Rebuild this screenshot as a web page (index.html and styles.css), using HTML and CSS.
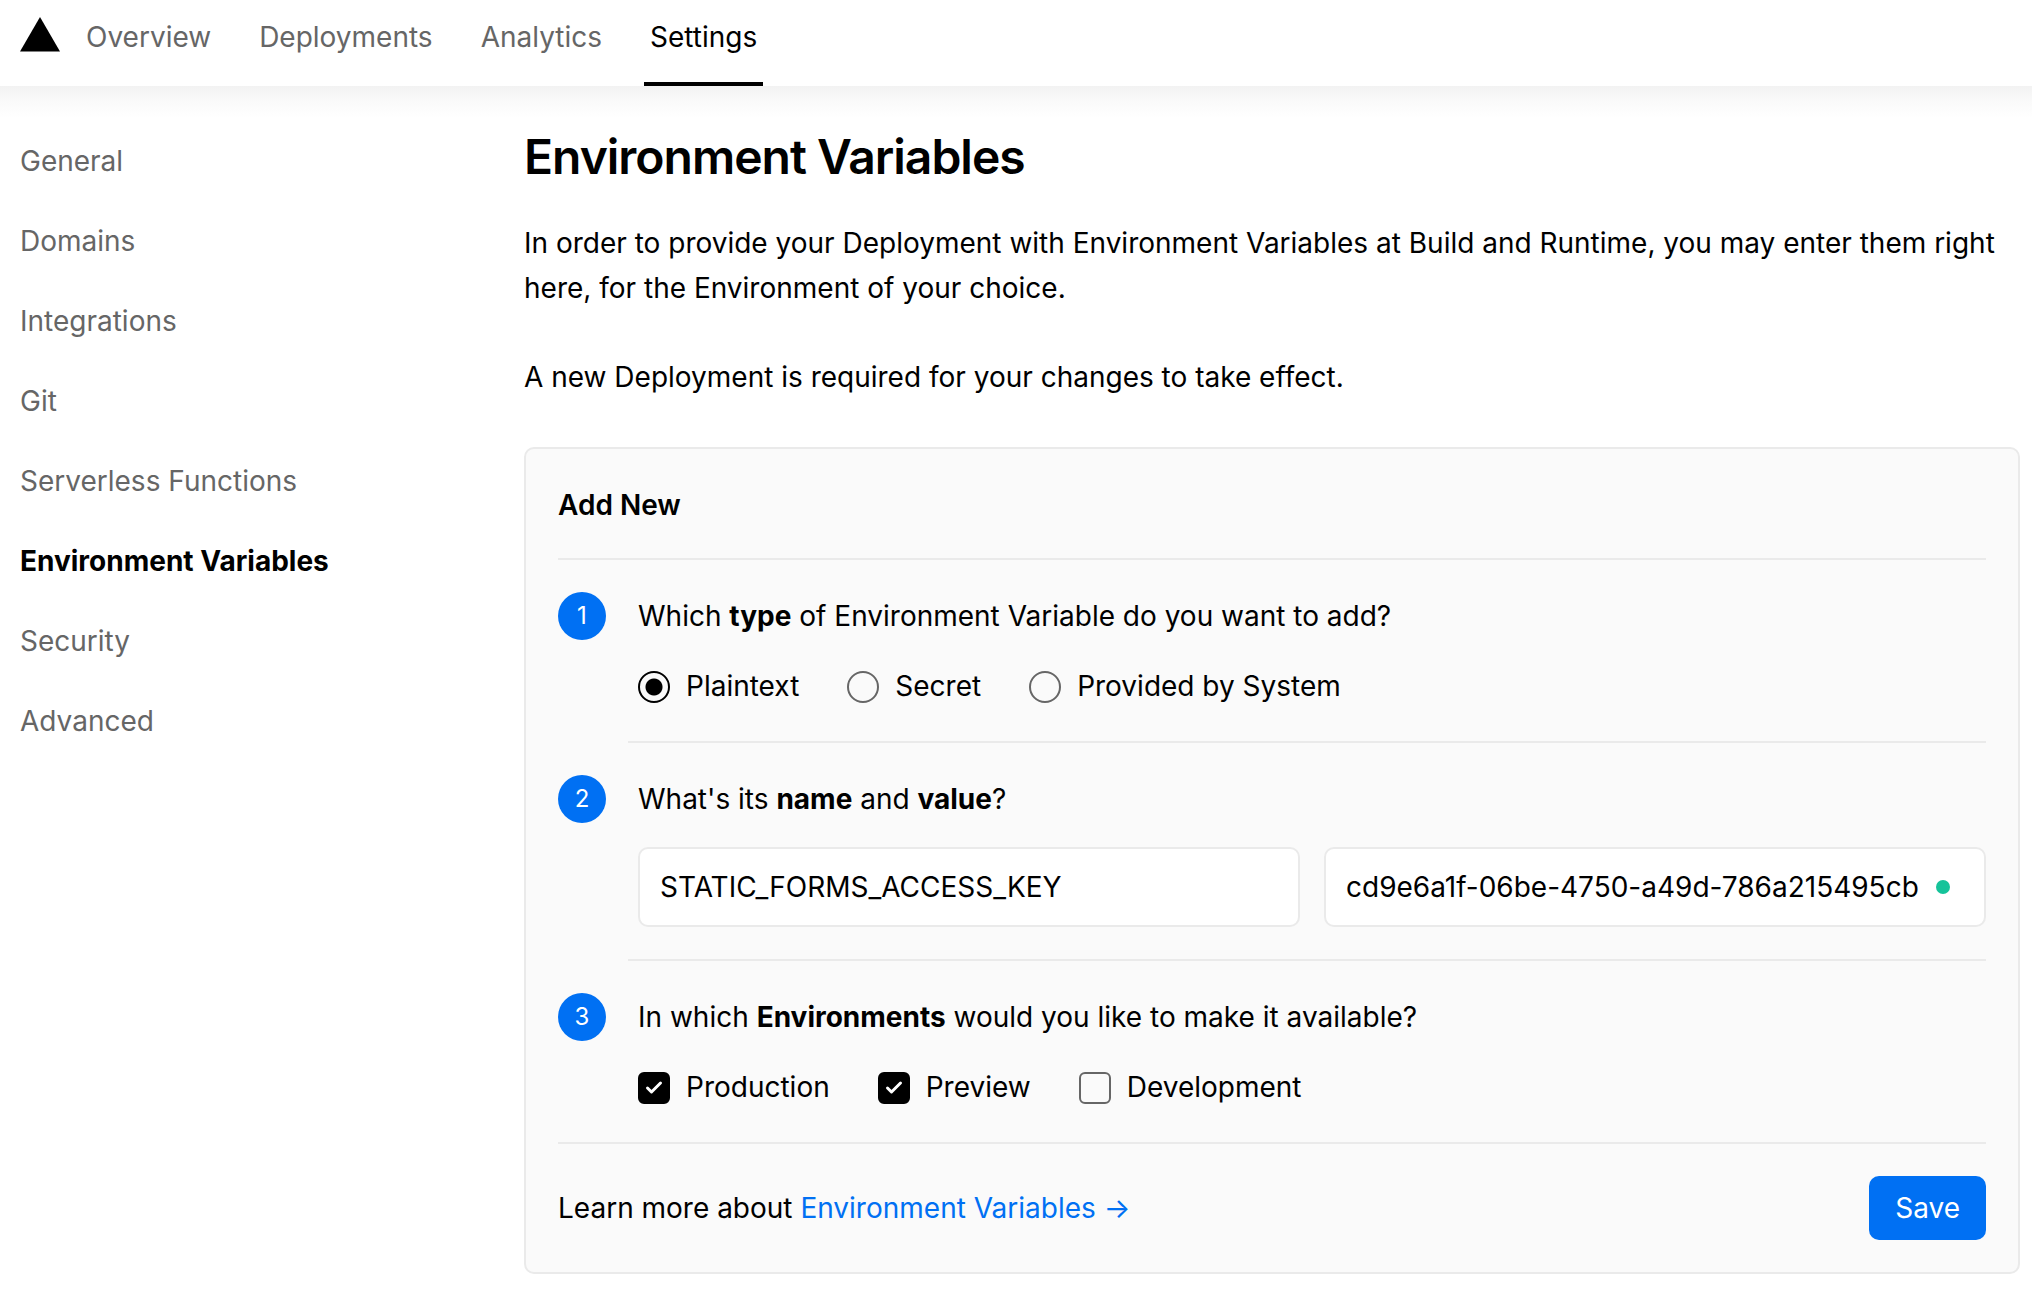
FILE: index.html
```html
<!DOCTYPE html>
<html lang="en">
<head>
<meta charset="utf-8">
<meta name="viewport" content="width=device-width, initial-scale=1">
<title>Environment Variables</title>
<link rel="stylesheet" href="styles.css">
</head>
<body>
<header class="topbar">
  <a class="logo" href="#" aria-label="Home"><svg width="40" height="35" viewBox="0 0 40 35" aria-hidden="true"><path d="M20 0L40 34.500H0z"/></svg></a>
  <nav class="tabs" aria-label="Project">
    <a class="tab" href="#">Overview</a>
    <a class="tab" href="#">Deployments</a>
    <a class="tab" href="#">Analytics</a>
    <a class="tab tab-active" href="#" aria-current="page">Settings</a>
  </nav>
</header>
<div class="page">
  <nav class="sidebar" aria-label="Settings">
    <a class="side-link" href="#">General</a>
    <a class="side-link" href="#">Domains</a>
    <a class="side-link" href="#">Integrations</a>
    <a class="side-link" href="#">Git</a>
    <a class="side-link" href="#">Serverless Functions</a>
    <a class="side-link side-active" href="#" aria-current="page">Environment Variables</a>
    <a class="side-link" href="#">Security</a>
    <a class="side-link" href="#">Advanced</a>
  </nav>
  <main class="content">
    <h1 class="title">Environment Variables</h1>
    <div class="intro">
      <p>In order to provide your Deployment with Environment Variables at Build and Runtime, you may enter them right here, for the Environment of your choice.</p>
      <p>A new Deployment is required for your changes to take effect.</p>
    </div>
    <form class="card">
      <h2 class="card-title">Add New</h2>
      <section class="step">
        <span class="badge">1</span>
        <div class="step-body">
          <p class="question" id="q-type">Which <strong>type</strong> of Environment Variable do you want to add?</p>
          <div class="options" role="radiogroup" aria-labelledby="q-type">
            <label class="option"><input class="radio" type="radio" name="type" checked>Plaintext</label>
            <label class="option"><input class="radio" type="radio" name="type">Secret</label>
            <label class="option"><input class="radio" type="radio" name="type">Provided by System</label>
          </div>
        </div>
      </section>
      <section class="step">
        <span class="badge">2</span>
        <div class="step-body">
          <p class="question">What's its <strong>name</strong> and <strong>value</strong>?</p>
          <div class="fields">
            <div class="field"><input class="field-input" type="text" aria-label="Name" value="STATIC_FORMS_ACCESS_KEY"></div>
            <div class="field"><input class="field-input" type="text" aria-label="Value" value="cd9e6a1f-06be-4750-a49d-786a215495cb"><span class="status-dot"></span></div>
          </div>
        </div>
      </section>
      <section class="step">
        <span class="badge">3</span>
        <div class="step-body">
          <p class="question" id="q-env">In which <strong>Environments</strong> would you like to make it available?</p>
          <div class="options" role="group" aria-labelledby="q-env">
            <label class="option"><span class="check"><input class="checkbox" type="checkbox" checked><svg class="tick" viewBox="0 0 32 32" aria-hidden="true"><path d="M9.500 16l4 4 9-9"/></svg></span>Production</label>
            <label class="option"><span class="check"><input class="checkbox" type="checkbox" checked><svg class="tick" viewBox="0 0 32 32" aria-hidden="true"><path d="M9.500 16l4 4 9-9"/></svg></span>Preview</label>
            <label class="option"><span class="check"><input class="checkbox" type="checkbox"></span>Development</label>
          </div>
        </div>
      </section>
      <footer class="card-footer">
        <p>Learn more about <a class="link" href="#">Environment Variables →</a></p>
        <button class="save" type="button">Save</button>
      </footer>
    </form>
  </main>
</div>
</body>
</html>
```
FILE: styles.css
```css
* {
  box-sizing: border-box;
}

body,
h1,
h2,
p {
  margin: 0;
}

body {
  background: #fff;
  color: #000;
  font-family: Inter, sans-serif;
  font-size: 28px;
  line-height: 45px;
}

a {
  color: inherit;
  text-decoration: none;
}

strong {
  font-weight: 700;
}

.topbar {
  display: flex;
  align-items: flex-start;
  gap: 20px;
  padding-left: 20px;
}

.logo {
  display: flex;
  padding-top: 17px;
}

.tabs {
  display: flex;
  gap: 36px;
}

.tab {
  padding: 15px 6px 22px;
  border-bottom: 4px solid transparent;
  color: #666;
}

.tab-active {
  border-bottom-color: #000;
  color: #000;
}

.page {
  display: grid;
  grid-template-columns: 480px minmax(0, 1fr);
  gap: 24px;
  padding: 42px 12px 28px 20px;
  background: linear-gradient(#f2f2f2, #fafafa 16px, #fff 32px);
}

.sidebar {
  display: flex;
  flex-direction: column;
  gap: 35px;
  padding-top: 11px;
}

.side-link {
  color: #666;
}

.side-active {
  color: #000;
  font-weight: 700;
}

.title {
  font-size: 48px;
  font-weight: 600;
  line-height: 58px;
  letter-spacing: -1px;
}

.intro {
  display: grid;
  gap: 44px;
  padding: 35px 0 47px;
}

.card {
  padding: 32px;
  border: 2px solid #eaeaea;
  border-radius: 10px;
  background: #fafafa;
}

.card-title {
  padding-bottom: 29px;
  border-bottom: 2px solid #eaeaea;
  font-size: 28px;
  font-weight: 600;
  line-height: 48px;
}

.step {
  display: grid;
  grid-template-columns: 70px minmax(0, 1fr);
}

.badge {
  width: 48px;
  height: 48px;
  margin-top: 32px;
  border-radius: 50%;
  background: #0070f3;
  color: #fff;
  font-size: 24px;
  line-height: 48px;
  text-align: center;
}

.step-body {
  display: grid;
  gap: 24px;
  padding: 32px 0 32px 10px;
  border-bottom: 2px solid #eaeaea;
}

.step:last-of-type .step-body {
  border-bottom: 0;
}

.question {
  line-height: 48px;
}

.options {
  display: flex;
  flex-wrap: wrap;
  gap: 48px;
}

.option {
  display: flex;
  align-items: center;
  gap: 16px;
}

.radio,
.checkbox {
  appearance: none;
  width: 32px;
  height: 32px;
  margin: 0;
  border: 2px solid #666;
}

.radio {
  border-radius: 50%;
}

.radio:checked {
  border-color: #000;
  background: radial-gradient(circle, #000 8px, transparent 9px);
}

.checkbox {
  border-radius: 6px;
}

.checkbox:checked {
  border-color: #000;
  background: #000;
}

.check {
  display: grid;
}

.check > * {
  grid-area: 1 / 1;
}

.tick {
  width: 32px;
  height: 32px;
  fill: none;
  stroke: #fff;
  stroke-width: 3;
  stroke-linecap: round;
  stroke-linejoin: round;
  pointer-events: none;
}

.fields {
  display: grid;
  grid-template-columns: 1fr 1fr;
  gap: 24px;
}

.field {
  display: flex;
  align-items: center;
  height: 80px;
  padding: 0 34px 0 20px;
  border: 2px solid #eaeaea;
  border-radius: 10px;
  background: #fff;
}

.field-input {
  flex: 1;
  min-width: 0;
  padding: 0;
  border: 0;
  background: none;
  color: #000;
  font: inherit;
}

.status-dot {
  width: 14px;
  height: 14px;
  border-radius: 50%;
  background: #15c39a;
}

.card-footer {
  display: flex;
  align-items: center;
  justify-content: space-between;
  padding-top: 32px;
  border-top: 2px solid #eaeaea;
}

.link {
  color: #0070f3;
}

.save {
  height: 64px;
  padding: 0 26px;
  border: 0;
  border-radius: 10px;
  background: #0070f3;
  color: #fff;
  font: inherit;
}
```
